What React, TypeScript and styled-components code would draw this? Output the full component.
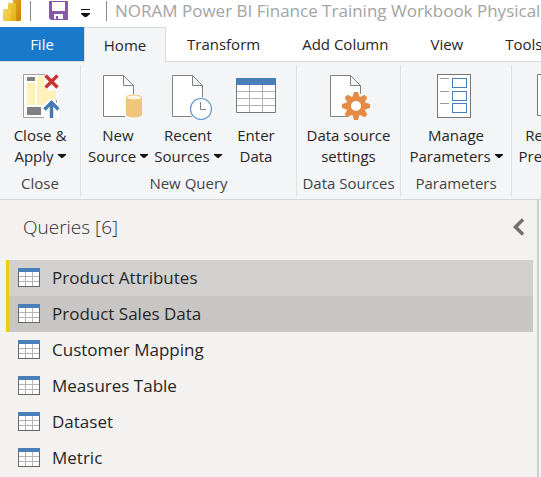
import React from "react";
import styled, { createGlobalStyle } from "styled-components";

const GlobalStyle = createGlobalStyle`
  *, *::before, *::after { box-sizing: border-box; }
  html, body, #root { height: 100%; }
  body {
    margin: 0;
    overflow: hidden;
    background: #ffffff;
    color: #262626;
    font-family: "Open Sans", "Noto Sans", sans-serif;
    font-size: 15px;
  }
  button { font: inherit; color: inherit; border: 0; background: none; padding: 0; }
  svg { display: block; flex: none; }
`;

const Window = styled.div`
  display: flex;
  flex-direction: column;
  min-height: 100vh;
  overflow: hidden;
`;

const TitleBar = styled.header`
  display: flex;
  height: 27px;
  padding-left: 3px;
  overflow: hidden;
`;

const TitleDivider = styled.span`
  flex: none;
  width: 1px;
  height: 20px;
  margin-top: 1px;
  background: #8a8a8a;
`;

const SaveButton = styled.button`
  margin: 1px 13px 0 18px;
  align-self: flex-start;
`;

const CustomizeButton = styled.button`
  margin: 9px 16px 0 0;
  align-self: flex-start;
`;

const LogoSlot = styled.span`
  margin-right: 9px;
`;

const Title = styled.h1`
  margin: 0 0 0 8px;
  font-size: 17px;
  line-height: 22px;
  font-weight: 400;
  white-space: nowrap;
  color: #a3a3a3;
`;

const TabBar = styled.nav`
  display: flex;
  flex: none;
  height: 35px;
  border-bottom: 1px solid #d9dadc;
`;

const Tab = styled.button<{ $kind?: "file" | "active" }>`
  flex: none;
  padding: 0 21px;
  line-height: 34px;
  white-space: nowrap;
  ${({ $kind }) =>
    $kind === "file" &&
    `padding: 0; width: 84px; background: #1979ca; color: #ffffff;`}
  ${({ $kind }) =>
    $kind === "active" &&
    `padding: 0; width: 82px; height: 35px; background: #f4f5f7; border: 1px solid #d9dadc; border-bottom: 0;`}
`;

const Ribbon = styled.div`
  display: flex;
  flex: none;
  height: 138px;
  padding: 3px 0;
  background: #f4f5f7;
  border-bottom: 1px solid #d6d6d6;
  overflow: hidden;
`;

const Group = styled.section<{ $width: number }>`
  display: flex;
  flex-direction: column;
  flex: none;
  width: ${({ $width }) => $width}px;
  border-right: 1px solid #dedfe1;
`;

const GroupButtons = styled.div<{ $columns?: string }>`
  display: grid;
  grid-template-columns: ${({ $columns }) => $columns ?? "1fr"};
  height: 107px;
`;

const GroupLabel = styled.h2`
  margin: 0;
  padding-top: 2px;
  font-size: 15px;
  line-height: 28px;
  font-weight: 400;
  text-align: center;
  white-space: nowrap;
  color: #444444;
`;

const RibbonButton = styled.button`
  display: flex;
  flex-direction: column;
  align-items: center;
  line-height: 21px;
  white-space: nowrap;
`;

const IconSlot = styled.span`
  display: block;
  height: 60px;
  padding-top: 9px;
`;

const CaretLine = styled.span`
  display: flex;
  align-items: center;
  gap: 4px;
`;

const Workspace = styled.main`
  display: flex;
  flex: 1;
  background: #f3f3f4;
`;

const QueriesPane = styled.aside`
  flex: 1;
  background: #f3f2f0;
  border-right: 2px solid #cfcecd;
  margin-right: 2px;
`;

const PaneHeader = styled.div`
  display: flex;
  justify-content: space-between;
  align-items: center;
  height: 60px;
  padding: 0 12px 6px 23px;
`;

const PaneTitle = styled.h2`
  margin: 0;
  font-size: 19px;
  line-height: 26px;
  font-weight: 300;
  color: #333333;
`;

const QueryList = styled.ul`
  margin: 0 4px 0 6px;
  padding: 0;
  list-style: none;
`;

const QueryItem = styled.li<{ $shade?: string }>`
  border-left: 3px solid ${({ $shade }) => ($shade ? "#f2c811" : "transparent")};
  background: ${({ $shade }) => $shade ?? "transparent"};
`;

const QueryButton = styled.button`
  display: flex;
  align-items: center;
  gap: 12px;
  width: 100%;
  height: 36px;
  padding-left: 9px;
  font-size: 17px;
  line-height: 24px;
  text-align: left;
`;

const Caret = () => (
  <svg width="8" height="10" viewBox="0 0 8 10" aria-hidden="true">
    <path d="M0 2h8v1L4.500 6h-1L0 3z" fill="#111" />
  </svg>
);

const Logo = () => (
  <svg width="18" height="21" viewBox="0 0 18 21" role="img" aria-label="Power BI">
    <defs>
      <linearGradient id="bar1" x1="0" y1="0" x2="1" y2="1">
        <stop offset="0" stopColor="#f0d45c" />
        <stop offset="1" stopColor="#f0c52e" />
      </linearGradient>
      <linearGradient id="bar2" x1="0" y1="0" x2="1" y2="1">
        <stop offset="0" stopColor="#f2cf47" />
        <stop offset="1" stopColor="#e6ad10" />
      </linearGradient>
      <linearGradient id="bar3" x1="0" y1="0" x2="1" y2="1">
        <stop offset="0" stopColor="#e6ad14" />
        <stop offset="1" stopColor="#c87d0e" />
      </linearGradient>
    </defs>
    <path d="M10-2h8v22q0 1-1 1h-7z" fill="url(#bar3)" />
    <path d="M5 4q0-1 1-1h6q1 0 1 1v17H5z" fill="url(#bar2)" />
    <path d="M0 10q0-1 1-1h6q1 0 1 1v11H1q-1 0-1-1z" fill="url(#bar1)" />
  </svg>
);

const SaveIcon = () => (
  <svg width="19" height="19" viewBox="0 0 19 19" aria-hidden="true">
    <path d="M0 0h19v19H2l-2-2z" fill="#8757ad" />
    <path d="M3 1h13v9H3zM5 13h9v5H5z" fill="#fff" />
    <path d="M7 15h2v3H7z" fill="#8757ad" />
  </svg>
);

const CustomizeIcon = () => (
  <svg width="9" height="9" viewBox="0 0 9 9" aria-hidden="true">
    <path d="M0 0h9v1H0zM0 4h9v1L5.500 8h-2L0 5z" fill="#111" />
  </svg>
);

const CloseApplyIcon = () => (
  <svg width="38" height="44" viewBox="-2 0 38 44" aria-hidden="true">
    <path d="M33.500 26V43.500H.5V.5H22" fill="#fff" stroke="#a0a0a0" />
    <path d="M4 3h8v4H4zM4 33h14v8H4z" fill="#808080" />
    <path d="M4 9h8v22H4zM14 2h7v11l5 4h7v14H14z" fill="#fff2b8" />
    <path d="M21 44v-8l-3-3 10-9 8 7v13z" fill="#fff" />
    <path d="M23.500 2.500l10 10m0-10l-10 10" stroke="#fff" strokeWidth="7" />
    <path d="M22.500 1.500l12 12m0-12l-12 12" stroke="#cb3232" strokeWidth="3.500" />
    <path d="M28.500 44V29M21.500 35.500l7-7 7 7" fill="none" stroke="#467ab4" strokeWidth="3.500" />
  </svg>
);

const Page = () => (
  <path d="M.5.500h20l10 10v31H.5zM20.500.500v10h10" fill="#fff" stroke="#808080" />
);

const NewSourceIcon = () => (
  <svg width="48" height="45" viewBox="-9 -1 48 45" aria-hidden="true">
    <Page />
    <path d="M22 22q0-3 9-3h8v24H22z" fill="#f4f5f7" />
    <path d="M23 22.500v17c0 4 16 4 16 0v-17z" fill="#eec77d" />
    <ellipse cx="31" cy="22.500" rx="7.500" ry="2.500" fill="#fbf3e3" stroke="#eec77d" />
  </svg>
);

const RecentIcon = () => (
  <svg width="48" height="46" viewBox="-8 -1 48 46" aria-hidden="true">
    <Page />
    <circle cx="29" cy="34" r="12" fill="#f4f5f7" />
    <circle cx="29" cy="34" r="10.500" fill="#fff" stroke="#6796c8" strokeWidth="1.200" />
    <path d="M28.500 27v7.500H34" fill="none" stroke="#808080" />
  </svg>
);

const EnterDataIcon = () => (
  <svg width="40" height="44" viewBox="0 -4 40 44" aria-hidden="true">
    <path d="M.5.500h39v34H.5z" fill="#fff" stroke="#777" />
    <path d="M1 13.500h38M1 20.500h38M1 27.500h38M13.500 7v27M26.500 7v27" stroke="#b2b2b2" />
    <path d="M0 0h40v7H0z" fill="#4a7fba" />
  </svg>
);

const teeth = [0, 45, 90, 135, 180, 225, 270, 315];

const SettingsIcon = () => (
  <svg width="42" height="46" viewBox="-2 -1 42 46" aria-hidden="true">
    <Page />
    <circle cx="26" cy="31" r="13" fill="#f4f5f7" />
    <g fill="#e58b43">
      {teeth.map((angle) => (
        <path
          key={angle}
          d="M22.500 22l1.500-5h4l1.500 5z"
          transform={`rotate(${angle} 26 31)`}
        />
      ))}
    </g>
    <circle cx="26" cy="31" r="7.500" fill="#fff" stroke="#e58b43" strokeWidth="5" />
  </svg>
);

const ParametersIcon = () => (
  <svg width="38" height="44" viewBox="0 0 38 44" shapeRendering="crispEdges" aria-hidden="true">
    <path d="M.5.500h33v43H.5z" fill="#fff" stroke="#777" />
    <path d="M3 4.500h9M3 17.500h9M3 29.500h9" stroke="#999" />
    <path d="M15.500 4.500h14v9h-14zM15.500 17.500h14v9h-14zM15.500 29.500h14v9h-14z" fill="#fff" stroke="#4a7fba" />
  </svg>
);

const RefreshIcon = () => (
  <svg width="30" height="44" viewBox="0 0 30 44" aria-hidden="true">
    <path d="M.5.500h20l9 9v32H.5zM20.500.500v9h9" fill="#fff" stroke="#777" />
  </svg>
);

const TableIcon = () => (
  <svg width="22" height="20" viewBox="0 0 22 20" shapeRendering="crispEdges" aria-hidden="true">
    <path d="M.5.500h21v18H.5z" fill="#fff" stroke="#666" />
    <path d="M1 8.500h20M1 13.500h20M7.500 4v14M14.500 4v14" stroke="#b5b5b5" />
    <path d="M0 0h22v4H0z" fill="#4a7fba" />
  </svg>
);

const CollapseIcon = () => (
  <svg width="12" height="18" viewBox="0 0 12 18" aria-hidden="true">
    <path d="M10 1.500L2.500 9l7.500 7.500" fill="none" stroke="#707070" strokeWidth="3.500" />
  </svg>
);

type CommandProps = {
  icon: React.ReactNode;
  first: string;
  second: string;
  menu?: boolean;
};

const Command = ({ icon, first, second, menu }: CommandProps) => (
  <RibbonButton type="button">
    <IconSlot>{icon}</IconSlot>
    <span>{first}</span>
    <CaretLine>
      {second}
      {menu && <Caret />}
    </CaretLine>
  </RibbonButton>
);

const queries = [
  { name: "Product Attributes", shade: "#d1d0ce" },
  { name: "Product Sales Data", shade: "#c7c6c4" },
  { name: "Customer Mapping" },
  { name: "Measures Table" },
  { name: "Dataset" },
  { name: "Metric" },
];

export default function App() {
  return (
    <Window>
      <GlobalStyle />
      <TitleBar>
        <LogoSlot>
          <Logo />
        </LogoSlot>
        <TitleDivider />
        <SaveButton type="button" aria-label="Save">
          <SaveIcon />
        </SaveButton>
        <CustomizeButton type="button" aria-label="Customize toolbar">
          <CustomizeIcon />
        </CustomizeButton>
        <TitleDivider />
        <Title>NORAM Power BI Finance Training Workbook Physical</Title>
      </TitleBar>
      <TabBar>
        <Tab type="button" $kind="file">File</Tab>
        <Tab type="button" $kind="active">Home</Tab>
        <Tab type="button">Transform</Tab>
        <Tab type="button">Add Column</Tab>
        <Tab type="button">View</Tab>
        <Tab type="button">Tools</Tab>
      </TabBar>
      <Ribbon>
        <Group $width={81}>
          <GroupButtons>
            <Command icon={<CloseApplyIcon />} first="Close &" second="Apply" menu />
          </GroupButtons>
          <GroupLabel>Close</GroupLabel>
        </Group>
        <Group $width={216}>
          <GroupButtons $columns="74px 66px 70px">
            <Command icon={<NewSourceIcon />} first="New" second="Source" menu />
            <Command icon={<RecentIcon />} first="Recent" second="Sources" menu />
            <Command icon={<EnterDataIcon />} first="Enter" second="Data" />
          </GroupButtons>
          <GroupLabel>New Query</GroupLabel>
        </Group>
        <Group $width={104}>
          <GroupButtons>
            <Command icon={<SettingsIcon />} first="Data source" second="settings" />
          </GroupButtons>
          <GroupLabel>Data Sources</GroupLabel>
        </Group>
        <Group $width={111}>
          <GroupButtons>
            <Command icon={<ParametersIcon />} first="Manage" second="Parameters" menu />
          </GroupButtons>
          <GroupLabel>Parameters</GroupLabel>
        </Group>
        <Group $width={81}>
          <GroupButtons>
            <Command icon={<RefreshIcon />} first="Refresh" second="Preview" menu />
          </GroupButtons>
        </Group>
      </Ribbon>
      <Workspace>
        <QueriesPane>
          <PaneHeader>
            <PaneTitle>Queries [6]</PaneTitle>
            <button type="button" aria-label="Collapse queries pane">
              <CollapseIcon />
            </button>
          </PaneHeader>
          <QueryList>
            {queries.map(({ name, shade }) => (
              <QueryItem key={name} $shade={shade}>
                <QueryButton type="button">
                  <TableIcon />
                  {name}
                </QueryButton>
              </QueryItem>
            ))}
          </QueryList>
        </QueriesPane>
      </Workspace>
    </Window>
  );
}
